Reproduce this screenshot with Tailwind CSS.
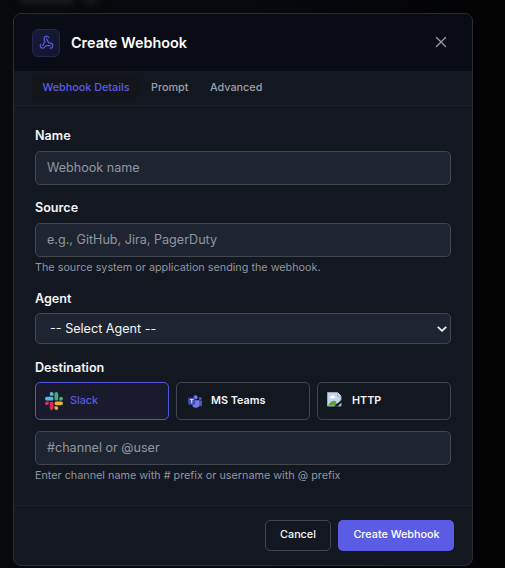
<!DOCTYPE html>
<html lang="en">
<head>
<meta charset="utf-8">
<title>Create Webhook</title>
<script src="https://cdn.jsdelivr.net/npm/@tailwindcss/browser@4"></script>
</head>
<body class="h-[568px] w-[505px] overflow-hidden bg-[#060709] bg-linear-to-r from-[#08090b] via-[#07090d] to-[#030304] pl-[13px] pt-[13px] font-['Inter',sans-serif] text-[#f3f4f6]">
<div class="absolute left-[20px] top-[-7px] h-2.5 w-[54px] bg-[#1d1e22] blur-[4px]"></div>
<div class="absolute left-[85px] top-[-6px] h-2.5 w-3 bg-[#1b1c20] blur-[4px]"></div>
<main class="relative flex h-[553px] w-[460px] flex-col overflow-hidden rounded-[8px] border border-[#2b2d35] bg-[#131720]">
  <header class="flex h-[57px] shrink-0 items-center bg-[#090c14] pl-[18px] pr-[25px]">
    <div class="flex size-7 items-center justify-center rounded-[6px] border border-[#242650] bg-linear-to-br from-[#181a36] to-[#121430]">
      <svg class="size-[15px]" viewBox="0 0 24 24" fill="none" stroke="#5658dc" stroke-width="2" stroke-linecap="round" stroke-linejoin="round"><path d="M18 16.98h-5.99c-1.1 0-1.95.94-2.48 1.9A4 4 0 0 1 2 17c.01-.7.2-1.4.57-2"/><path d="m6 17 3.13-5.78c.53-.97.1-2.18-.5-3.1a4 4 0 1 1 6.89-4.06"/><path d="m12 6 3.13 5.73C15.66 12.7 16.9 13 18 13a4 4 0 0 1 0 8"/></svg>
    </div>
    <h1 class="ml-[11px] whitespace-nowrap text-[14.4px] font-semibold leading-5 text-white">Create Webhook</h1>
    <svg class="ml-auto mb-[2px] size-[12px]" viewBox="0 0 12 12" fill="none" stroke="#9a9ca4" stroke-width="1.3" stroke-linecap="round"><path d="m1.500 1.500 9 9m0-9-9 9"/></svg>
  </header>
  <nav class="flex h-[35px] shrink-0 items-start border-b border-[#1d212a] pl-[18px] pt-[5px] text-[10.8px] font-medium text-[#9ca0a9]">
    <span class="flex h-[23px] w-[108px] items-center justify-center whitespace-nowrap rounded-[6px] bg-[#13151b] pt-px text-[#5b5ce6]">Webhook Details</span>
    <span class="ml-[11px] flex h-[23px] w-[37px] items-center whitespace-nowrap pt-px">Prompt</span>
    <span class="ml-[22px] flex h-[23px] items-center whitespace-nowrap pt-px">Advanced</span>
  </nav>
  <form class="flex h-[399px] shrink-0 flex-col px-[21px] pt-[20px]">
    <label class="h-[25px] text-[12.6px] font-semibold leading-5">Name</label>
    <input class="h-[34px] shrink-0 rounded-[5px] border border-[#41454e] bg-[#1f2530] px-[11px] pb-[2px] text-[12.6px] placeholder:text-[#9195a0]" placeholder="Webhook name">
    <label class="mt-[13px] h-[25px] text-[12.6px] font-semibold leading-5">Source</label>
    <input class="h-[34px] shrink-0 rounded-[5px] border border-[#41454e] bg-[#1f2530] px-[11px] pb-[2px] text-[12.6px] placeholder:text-[#9195a0]" placeholder="e.g., GitHub, Jira, PagerDuty">
    <p class="mt-[3px] h-[17px] text-[10.8px] leading-4 text-[#9195a0]">The source system or application sending the webhook.</p>
    <label class="mt-[12px] h-[24px] text-[12.6px] font-semibold leading-5">Agent</label>
    <div class="grid h-[31px] shrink-0 items-center">
      <select class="col-start-1 row-start-1 h-[31px] w-full appearance-none rounded-[5px] border border-[#41454e] bg-[#1f2530] pl-[14px] pt-px text-[12.6px] text-[#f3f4f6]"><option>-- Select Agent --</option></select>
      <svg class="pointer-events-none col-start-1 row-start-1 mr-[4px] h-[6px] w-[10px] justify-self-end" viewBox="0 0 10 6" fill="none" stroke="#f3f4f6" stroke-width="1.8"><path d="m.8.8 4.2 4 4.2-4"/></svg>
    </div>
    <label class="mt-[14px] h-[24px] text-[12.6px] font-semibold leading-5">Destination</label>
    <div class="grid h-[38px] shrink-0 grid-cols-3 gap-[7px] text-[10.8px] font-semibold">
      <div class="flex items-center rounded-[5px] border border-[#5254dc] bg-[#191b2d] pl-[9px] text-[#5759e0]">
        <svg class="size-[18px]" viewBox="0 0 122.8 122.8"><path fill="#d92d55" d="M25.8 77.6a12.9 12.9 0 1 1-12.9-12.9h12.9zm6.5 0a12.9 12.9 0 0 1 25.8 0v32.3a12.9 12.9 0 0 1-25.8 0z"/><path fill="#54b9de" d="M45.2 25.8a12.9 12.9 0 1 1 12.9-12.9v12.9zm0 6.5a12.9 12.9 0 0 1 0 25.8H12.9a12.9 12.9 0 0 1 0-25.8z"/><path fill="#48aa78" d="M97 45.2a12.9 12.9 0 1 1 12.9 12.9H97zm-6.5 0a12.9 12.9 0 0 1-25.8 0V12.9a12.9 12.9 0 0 1 25.8 0z"/><path fill="#e7b13a" d="M77.6 97a12.9 12.9 0 1 1-12.9 12.9V97zm0-6.5a12.9 12.9 0 0 1 0-25.8h32.3a12.9 12.9 0 0 1 0 25.8z"/></svg>
        <span class="ml-[7px] pt-px font-medium">Slack</span>
      </div>
      <div class="flex items-center rounded-[5px] border border-[#41454e] pl-[9px]">
        <svg class="size-[18px]" viewBox="0 0 18 18"><circle cx="14.2" cy="6.400" r="1.5" fill="#4e56bd"/><path d="M11.500 8.400H16v3.800a2.400 2.400 0 0 1-4.500 1z" fill="#4e56bd"/><circle cx="9.600" cy="5.300" r="2" fill="#777fe5"/><path d="M6.300 8.300h7v4a3.500 3.500 0 0 1-7 0z" fill="#747ce6"/><rect x="2.200" y="5.800" width="7" height="7" rx=".7" fill="#464eb5"/><path d="M4 7.600h3.400M5.700 7.600v3.700" stroke="#e5e7ff" stroke-width="1"/></svg>
        <span class="ml-[7px] whitespace-nowrap pt-px">MS Teams</span>
      </div>
      <div class="flex items-center rounded-[5px] border border-[#41454e] pl-[9px]">
        <svg class="mb-[3px] size-[18px]" viewBox="0 0 18 18"><path d="M.5 1.500h10l3.500 3.500v10H.5z" fill="#c5d5f5" stroke="#a5a7ab"/><path d="M3 6.500c0-1 .8-1.600 1.600-1.500C5.200 3.600 7.300 4 7.300 5.600c1 0 1.300 1.300.3 1.700H3.600z" fill="#fff"/><path d="M1 14.500C3.500 10.500 6 9.300 8.500 10l2.500 4.500z" fill="#59a33c"/><path d="M10.500 1.500V5H14" fill="#f2f3f5" stroke="#a5a7ab"/><path d="m7 15.500 8-7v2.500l-4.500 4.500z" fill="#131720"/></svg>
        <span class="ml-[7px] pt-px">HTTP</span>
      </div>
    </div>
    <input class="mt-[11px] h-[34px] shrink-0 rounded-[5px] border border-[#41454e] bg-[#1f2530] px-[11px] pb-[2px] text-[12.6px] placeholder:text-[#9195a0]" placeholder="#channel or @user">
    <p class="mt-[3px] h-4 text-[10.8px] leading-4 text-[#9195a0]">Enter channel name with # prefix or username with @ prefix</p>
  </form>
  <footer class="flex grow items-start justify-end gap-[7px] border-t border-[#1d212a] pr-[18px] pt-[14px] text-[10.8px] font-medium">
    <button class="h-[31px] w-[66px] whitespace-nowrap rounded-[5px] border border-[#41454e]">Cancel</button>
    <button class="h-[31px] w-[116px] whitespace-nowrap rounded-[5px] bg-[#5b5ce6] pl-px text-white">Create Webhook</button>
  </footer>
</main>
</body>
</html>
